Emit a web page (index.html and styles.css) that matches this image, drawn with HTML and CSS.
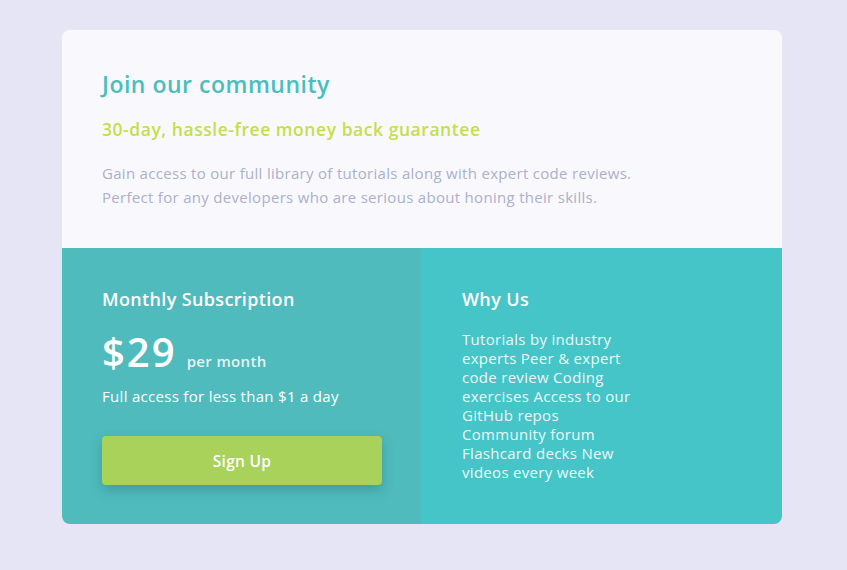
FILE: index.html
```html
<!DOCTYPE html>
<html lang="en">
<head>
<meta charset="utf-8">
<title>Single price grid</title>
<link rel="stylesheet" href="styles.css">
</head>
<body>
<main class="card">
  <section class="intro">
    <h1 class="title">Join our community</h1>
    <h2 class="guarantee">30-day, hassle-free money back guarantee</h2>
    <p class="desc">Gain access to our full library of tutorials along with expert code reviews.<br>Perfect for any developers who are serious about honing their skills.</p>
  </section>
  <div class="bottom">
    <section class="sub">
      <h3 class="head">Monthly Subscription</h3>
      <div class="price"><span class="amount">$29</span><span class="per">per month</span></div>
      <p class="full">Full access for less than $1 a day</p>
      <button class="btn">Sign Up</button>
    </section>
    <section class="why">
      <h3 class="head">Why Us</h3>
      <p class="list">Tutorials by industry<br>experts Peer &amp; expert<br>code review Coding<br>exercises Access to our<br>GitHub repos<br>Community forum<br>Flashcard decks New<br>videos every week</p>
    </section>
  </div>
</main>
</body>
</html>
```
FILE: styles.css
```css
* { box-sizing: border-box; }
html, body { margin: 0; padding: 0; }
body {
  background: #e6e5f6;
  font-family: "Open Sans", "Noto Sans", sans-serif;
  padding-top: 30px;
  min-height: 570px;
}
.card {
  width: 720px;
  margin: 0 auto 0 62px;
  border-radius: 8px;
  overflow: hidden;
}
.intro {
  background: #f9f9fd;
  height: 218px;
  padding: 40px 40px 0 40px;
}
.title {
  margin: 0;
  color: #4abebd;
  font-size: 23px;
  font-weight: 600;
  line-height: 28px;
  letter-spacing: 0.5px;
}
.guarantee {
  margin: 19px 0 0;
  color: #c4df49;
  font-size: 17.5px;
  font-weight: 600;
  line-height: 24px;
  letter-spacing: 0.55px;
}
.desc {
  margin: 20px 0 0;
  color: #abb0cb;
  font-size: 15px;
  line-height: 24px;
  letter-spacing: 0.3px;
}
.bottom {
  display: grid;
  grid-template-columns: 359px 361px;
  height: 276px;
}
.sub { background: #4fbbbd; padding: 40px 40px 0 40px; color: #fff; }
.why { background: #45c5c8; padding: 40px 40px 0 41px; color: #fff; }
.head {
  margin: 0;
  font-size: 18px;
  font-weight: 600;
  line-height: 22px;
  letter-spacing: 0.35px;
}
.price {
  display: flex;
  align-items: baseline;
  margin-top: 22px;
  height: 40px;
}
.amount { font-size: 40px; font-weight: 600; line-height: 40px; letter-spacing: 2px; }
.per { font-size: 15px; font-weight: 600; margin-left: 10px; opacity: 0.85; letter-spacing: 0.35px; }
.full { margin: 14px 0 0; font-size: 15px; line-height: 20px; letter-spacing: 0.3px; }
.btn {
  display: block;
  margin-top: 30px;
  width: 280px;
  height: 49px;
  border: none;
  border-radius: 4px;
  background: #a8d25a;
  color: #fff;
  font-family: inherit;
  font-size: 15.5px;
  font-weight: 600;
  letter-spacing: 0.3px;
  box-shadow: 0 5px 12px rgba(40, 80, 90, 0.3);
}
.list {
  margin: 20px 0 0;
  font-size: 15px;
  line-height: 19px;
  letter-spacing: 0.3px;
  opacity: 0.9;
}
```
